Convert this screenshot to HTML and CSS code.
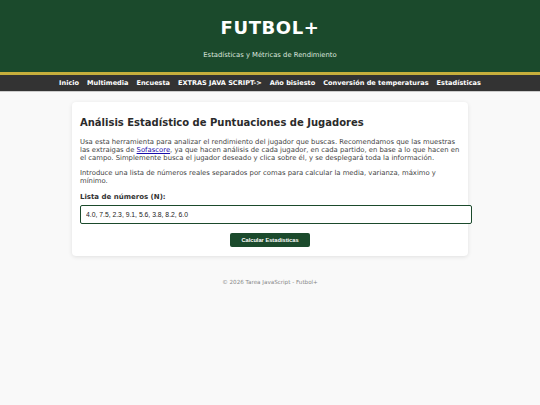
FILE: index.html
```html
<!DOCTYPE html>
<html lang="es">
<head>
<meta charset="utf-8">
<title>FUTBOL+</title>
<link rel="stylesheet" href="styles.css">
</head>
<body>
<header class="site-header">
  <h1 class="site-title">FUTBOL+</h1>
  <p class="site-subtitle">Estadísticas y Métricas de Rendimiento</p>
</header>
<nav class="site-nav">
  <a href="#">Inicio</a>
  <a href="#">Multimedia</a>
  <a href="#">Encuesta</a>
  <a href="#">EXTRAS JAVA SCRIPT-&gt;</a>
  <a href="#">Año bisiesto</a>
  <a href="#">Conversión de temperaturas</a>
  <a href="#">Estadísticas</a>
</nav>
<main class="card">
  <h2 class="card-title">Análisis Estadístico de Puntuaciones de Jugadores</h2>
  <p class="card-text">Usa esta herramienta para analizar el rendimiento del jugador que buscas. Recomendamos que las muestras las extraigas de <a href="#">Sofascore</a>, ya que hacen análisis de cada jugador, en cada partido, en base a lo que hacen en el campo. Simplemente busca el jugador deseado y clica sobre él, y se desplegará toda la información.</p>
  <p class="card-text">Introduce una lista de números reales separados por comas para calcular la media, varianza, máximo y mínimo.</p>
  <label class="field-label" for="nums">Lista de números (N):</label>
  <input class="field-input" id="nums" type="text" value="4.0, 7.5, 2.3, 9.1, 5.6, 3.8, 8.2, 6.0">
  <div class="actions">
    <button class="btn" type="button">Calcular Estadisticas</button>
  </div>
</main>
<footer class="site-footer">© 2026 Tarea JavaScript - Futbol+</footer>
</body>
</html>
```
FILE: styles.css
```css
* { box-sizing: content-box; }
body {
  margin: 0;
  font-family: "DejaVu Sans", Verdana, sans-serif;
  background: #f9f9f9;
  color: #333;
}
.site-header {
  background: #1b4a2c;
  color: #fff;
  text-align: center;
  padding: 17px 0 13px;
  border-bottom: 3px solid #c7ae3c;
}
.site-title {
  margin: 0;
  font-size: 18px;
  line-height: 22px;
  font-weight: bold;
  letter-spacing: 0.6px;
}
.site-subtitle {
  margin: 12px 0 0;
  font-size: 6.8px;
  line-height: 8px;
  color: #dde6df;
}
.site-nav {
  background: #333;
  display: flex;
  justify-content: center;
  gap: 8px;
  padding: 4px 0;
  border-bottom: 1px solid #ccc;
}
.site-nav a {
  color: #fff;
  font-size: 6.55px;
  line-height: 8px;
  font-weight: bold;
  text-decoration: none;
}
.card {
  display: block;
  width: 380px;
  margin: 10px auto 0;
  padding: 14px 8px 9px;
  background: #fff;
  border-radius: 4px;
  box-shadow: 0 1px 4px rgba(0,0,0,0.1);
}
.card-title {
  margin: 0 0 8px;
  font-size: 10px;
  line-height: 14px;
  color: #2b2b2b;
}
.card-text {
  margin: 0 0 7px;
  font-size: 6.85px;
  line-height: 8px;
  color: #444;
}
.card-text a { color: #1a0dab; }
.field-label {
  display: block;
  margin-top: 8px;
  font-size: 7px;
  line-height: 8px;
  font-weight: bold;
  color: #333;
}
.field-input {
  display: block;
  width: 100%;
  margin: 4px 0 0;
  padding: 5px 5px;
  border: 1px solid #1b4a2c;
  border-radius: 2px;
  font-family: "Liberation Sans", Arial, sans-serif;
  font-size: 6.8px;
  line-height: 7px;
  color: #222;
  background: #fff;
}
.actions {
  display: flex;
  justify-content: center;
  margin-top: 9px;
}
.btn {
  background: #1b4a2c;
  color: #fff;
  border: none;
  border-radius: 2px;
  padding: 4px 11px;
  font-family: "Liberation Sans", Arial, sans-serif;
  font-size: 5.7px;
  line-height: 6px;
  font-weight: bold;
}
.site-footer {
  text-align: center;
  margin-top: 23px;
  font-size: 5.6px;
  color: #888;
}
```
